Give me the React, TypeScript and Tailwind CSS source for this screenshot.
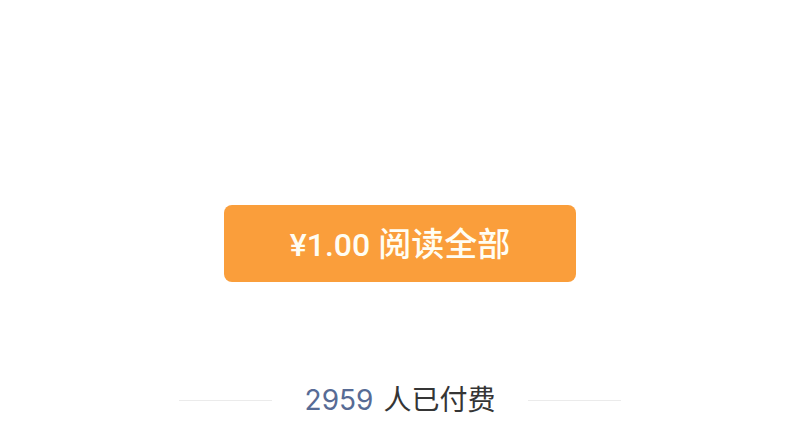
export default function App() {
  return (
    <main className="flex min-h-screen flex-col items-center bg-white pt-[205px] font-['Inter','Noto_Sans_CJK_SC',sans-serif]">
      <button
        type="button"
        className="flex h-[77px] w-[44%] items-center justify-center gap-2 rounded-lg bg-[#fa9e3b] pt-[2px] text-[33px] font-medium text-[#fffdf3]"
      >
        <span className="font-['Roboto',sans-serif] text-[32px]">¥1.00</span>
        <span>阅读全部</span>
      </button>

      <div className="mt-24 flex w-[442px] max-w-full items-center justify-between">
        <span className="h-px w-[93px] bg-[#ebebeb]" />
        <p className="flex items-center gap-[10px] text-[28px] leading-[44px] text-[#353535]">
          <a href="#readers" className="text-[#576b95]">2959</a>
          <span>人已付费</span>
        </p>
        <span className="h-px w-[93px] bg-[#ebebeb]" />
      </div>
    </main>
  );
}
